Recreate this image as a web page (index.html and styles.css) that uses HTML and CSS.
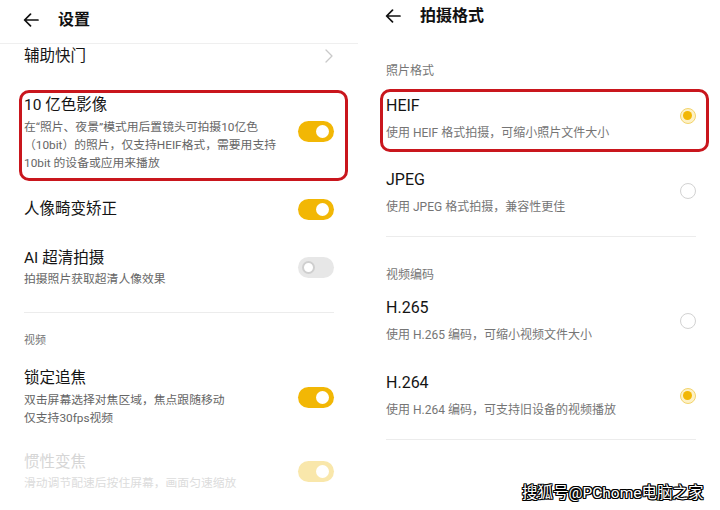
FILE: index.html
```html
<!DOCTYPE html>
<html lang="zh-CN">
<head>
<meta charset="utf-8">
<title>设置 / 拍摄格式</title>
<link rel="stylesheet" href="styles.css">
</head>
<body>
<div class="screen">
  <section class="panel">
    <header class="bar bar-left">
      <svg class="back" viewBox="0 0 16 14" width="16" height="14"><path d="M15 7H1.8M7.5 1.2L1.6 7l5.9 5.8" fill="none" stroke="#111" stroke-width="1.7" stroke-linecap="round" stroke-linejoin="round"/></svg>
      <h1 class="bar-title">设置</h1>
    </header>
    <div class="list">
      <div class="row mt-1">
        <div class="text"><div class="title">辅助快门</div></div>
        <svg class="chev" viewBox="0 0 8 14" width="8" height="14"><path d="M1 1l6 6-6 6" fill="none" stroke="#c9c9c9" stroke-width="1.3" stroke-linecap="round" stroke-linejoin="round"/></svg>
      </div>

      <div class="row hl hl-left">
        <div class="text">
          <div class="title">10 亿色影像</div>
          <div class="desc mt-2">在“照片、夜景”模式用后置镜头可拍摄10亿色<br>（10bit）的照片，仅支持HEIF格式，需要用支持<br>10bit 的设备或应用来播放</div>
        </div>
        <span class="toggle on lift-4"></span>
      </div>

      <div class="row mt-17">
        <div class="text"><div class="title">人像畸变矫正</div></div>
        <span class="toggle on"></span>
      </div>

      <div class="row mt-27">
        <div class="text">
          <div class="title">AI 超清拍摄</div>
          <div class="desc mt-1">拍摄照片获取超清人像效果</div>
        </div>
        <span class="toggle off"></span>
      </div>

      <div class="divider mt-24"></div>

      <div class="section left-section mt-19">视频</div>

      <div class="row mt-17">
        <div class="text">
          <div class="title">锁定追焦</div>
          <div class="desc mt-2">双击屏幕选择对焦区域，焦点跟随移动<br>仅支持30fps视频</div>
        </div>
        <span class="toggle on"></span>
      </div>

      <div class="row mt-24 disabled">
        <div class="text">
          <div class="title">惯性变焦</div>
          <div class="desc mt-1">滑动调节配速后按住屏幕，画面匀速缩放</div>
        </div>
        <span class="toggle dim"></span>
      </div>
    </div>
  </section>

  <section class="panel right">
    <header class="bar bar-right">
      <svg class="back" viewBox="0 0 16 14" width="16" height="14"><path d="M15 7H1.8M7.5 1.2L1.6 7l5.9 5.8" fill="none" stroke="#111" stroke-width="1.7" stroke-linecap="round" stroke-linejoin="round"/></svg>
      <h1 class="bar-title">拍摄格式</h1>
    </header>
    <div class="list">
      <div class="section mt-30">照片格式</div>

      <div class="row hl hl-right">
        <div class="text">
          <div class="title">HEIF</div>
          <div class="desc mt-7">使用 HEIF 格式拍摄，可缩小照片文件大小</div>
        </div>
        <span class="radio checked lift-5"></span>
      </div>

      <div class="row mt-17">
        <div class="text">
          <div class="title">JPEG</div>
          <div class="desc mt-7">使用 JPEG 格式拍摄，兼容性更佳</div>
        </div>
        <span class="radio lift-3"></span>
      </div>

      <div class="divider mt-20"></div>

      <div class="section mt-29">视频编码</div>

      <div class="row mt-13">
        <div class="text">
          <div class="title">H.265</div>
          <div class="desc mt-7">使用 H.265 编码，可缩小视频文件大小</div>
        </div>
        <span class="radio"></span>
      </div>

      <div class="row mt-28">
        <div class="text">
          <div class="title">H.264</div>
          <div class="desc mt-7">使用 H.264 编码，可支持旧设备的视频播放</div>
        </div>
        <span class="radio checked"></span>
      </div>

      <div class="divider mt-20"></div>
    </div>
  </section>

  <div class="watermark">搜狐号@PChome电脑之家</div>
</div>
</body>
</html>
```

FILE: styles.css
```css
html, body {
  margin: 0;
  padding: 0;
  background: #fff;
}

body {
  font-family: Roboto, "Noto Sans CJK SC", sans-serif;
  color: #151515;
}

.screen {
  position: relative;
  width: 720px;
  height: 510px;
  display: flex;
  justify-content: space-between;
  overflow: hidden;
  background: #fff;
}

.panel {
  width: 358px;
  flex: none;
}

.bar {
  display: flex;
  align-items: center;
  box-sizing: border-box;
  padding-left: 23px;
}

.bar-left {
  height: 44px;
  padding-bottom: 4px;
  border-bottom: 1px solid #efefef;
}

.bar-right {
  height: 32px;
}

.back {
  display: block;
  flex: none;
}

.bar-title {
  margin: 0 0 0 19px;
  font-size: 16px;
  line-height: 22px;
  font-weight: 700;
  color: #111;
}

.list {
  padding: 0 24px;
}

.row {
  display: flex;
  align-items: center;
  justify-content: space-between;
}

.text {
  flex: 1;
  min-width: 0;
}

.title {
  font-size: 15.5px;
  line-height: 22px;
  color: #141414;
  white-space: nowrap;
}

.desc {
  font-size: 11.8px;
  line-height: 18px;
  color: #666;
  white-space: nowrap;
}

.right .title {
  font-size: 16px;
}

.right .desc {
  font-size: 12px;
  color: #757575;
}

.section {
  font-size: 12px;
  line-height: 18px;
  color: #767676;
}

.left-section {
  font-size: 11px;
}

.divider {
  height: 1px;
  background: #ececec;
}

.chev {
  display: block;
  margin-right: 1px;
}

/* highlighted rows (red frame) */
.hl {
  border: 3px solid #c9161d;
  border-radius: 10px;
}

.hl-left {
  margin: 23px -14px 0 -5px;
  padding: 1px 11px 6px 2px;
}

.hl-right {
  margin: 9px -13px 0 -6px;
  padding: 3px 10px 7px 3px;
}

/* toggles */
.toggle {
  position: relative;
  flex: none;
  width: 36px;
  height: 21px;
  border-radius: 11px;
  box-sizing: border-box;
}

.toggle::after {
  content: "";
  position: absolute;
  top: 4px;
  width: 13px;
  height: 13px;
  border-radius: 50%;
  box-sizing: border-box;
  background: #fff;
}

.toggle.on {
  background: #f2b705;
}

.toggle.on::after {
  right: 5px;
}

.toggle.dim {
  background: #f9e7ab;
}

.toggle.dim::after {
  right: 5px;
}

.toggle.off {
  background: #e7e7e7;
}

.toggle.off::after {
  left: 4px;
  border: 2px solid #cfcfcf;
}

/* radios */
.radio {
  position: relative;
  flex: none;
  width: 16px;
  height: 16px;
  border-radius: 50%;
  box-sizing: border-box;
  border: 1.5px solid #d2d2d2;
  background: #fff;
}

.radio.checked {
  border-color: #f3d46c;
  background: #fdf1c6;
}

.radio.checked::after {
  content: "";
  position: absolute;
  left: 2px;
  top: 2px;
  width: 9px;
  height: 9px;
  border-radius: 50%;
  background: #f2b705;
}

.disabled .title {
  color: #d6d6d6;
}

.disabled .desc {
  color: #dcdcdc;
}

.watermark {
  position: absolute;
  left: 522px;
  top: 482px;
  font-size: 15.5px;
  line-height: 22px;
  font-weight: 400;
  color: #fff;
  text-shadow: 1px 0 0 #000, -1px 0 0 #000, 0 1px 0 #000, 0 -1px 0 #000,
    1px 1px 0 #000, -1px -1px 0 #000, 1px -1px 0 #000, -1px 1px 0 #000;
}

.mt-1 { margin-top: 1px; }
.mt-2 { margin-top: 2px; }
.mt-7 { margin-top: 7px; }
.mt-13 { margin-top: 13px; }
.mt-17 { margin-top: 17px; }
.mt-19 { margin-top: 19px; }
.mt-20 { margin-top: 20px; }
.mt-24 { margin-top: 24px; }
.mt-27 { margin-top: 27px; }
.mt-28 { margin-top: 28px; }
.mt-29 { margin-top: 29px; }
.mt-30 { margin-top: 30px; }

.lift-3 { margin-bottom: 3px; }
.lift-4 { margin-bottom: 4px; }
.lift-5 { margin-bottom: 5px; }
```
